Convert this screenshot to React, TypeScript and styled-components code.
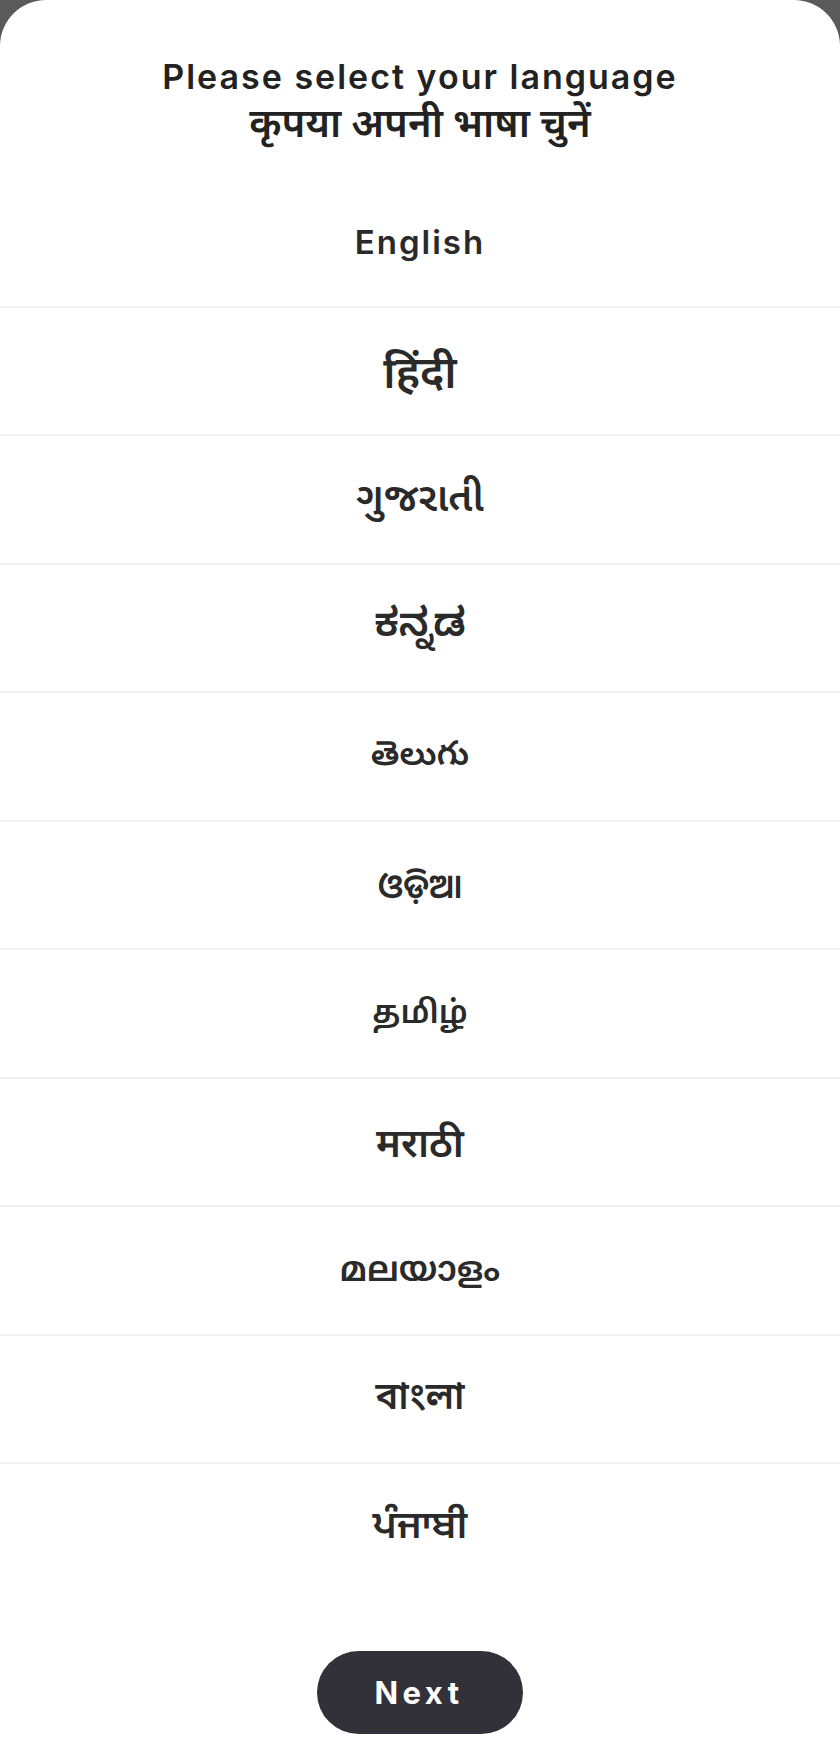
import React, { useState } from 'react';
import styled, { createGlobalStyle } from 'styled-components';

const GlobalStyle = createGlobalStyle`
  html, body {
    margin: 0;
    padding: 0;
    background: #5a5a5a;
  }
  body {
    font-family: Inter, "Noto Sans", "Noto Sans Devanagari", "Noto Sans Gujarati", "Noto Sans Kannada",
      "Noto Sans Telugu", "Noto Sans Oriya", "Noto Sans Tamil", "Noto Sans Malayalam",
      "Noto Sans Bengali", "Noto Sans Gurmukhi", sans-serif;
    -webkit-font-smoothing: antialiased;
  }
`;

const Sheet = styled.div`
  background: #ffffff;
  border-radius: 46px 46px 0 0;
  height: 1750px;
  display: flex;
  flex-direction: column;
  overflow: hidden;
`;

const Header = styled.div`
  padding: 54px 24px 33px;
  text-align: center;
`;

const TitleLine = styled.div<{ size: number; spacing: number }>`
  font-size: ${props => props.size}px;
  font-weight: 600;
  line-height: 46px;
  color: #222222;
  letter-spacing: ${props => props.spacing}px;
`;

const LanguageList = styled.ul`
  list-style: none;
  margin: 0;
  padding: 0;
`;

const LanguageRow = styled.li<{ selected: boolean; last: boolean; size: number; spacing: number }>`
  height: 126.5px;
  display: flex;
  align-items: center;
  justify-content: center;
  border-bottom: 2px solid ${props => (props.last ? 'transparent' : '#f1f1f1')};
  background: ${props => (props.selected ? '#f6f6f8' : '#ffffff')};
  font-size: ${props => props.size}px;
  letter-spacing: ${props => props.spacing}px;
  font-weight: 600;
  color: #2a2a2a;
  cursor: pointer;
`;

const Footer = styled.div`
  display: flex;
  justify-content: center;
  padding-top: 58px;
`;

const NextButton = styled.button`
  width: 206px;
  height: 83px;
  border: none;
  border-radius: 42px;
  background: #323038;
  color: #ffffff;
  font-family: Inter, "Noto Sans", sans-serif;
  font-size: 31px;
  font-weight: 700;
  letter-spacing: 4.5px;
  padding-left: 4px;
  cursor: pointer;
`;

const LANGUAGES = [
  { label: 'English', size: 33, spacing: 2 },
  { label: 'हिंदी', size: 44, spacing: 0 },
  { label: 'ગુજરાતી', size: 40, spacing: 0 },
  { label: 'ಕನ್ನಡ', size: 40, spacing: 0 },
  { label: 'తెలుగు', size: 34, spacing: 0 },
  { label: 'ଓଡ଼ିଆ', size: 34, spacing: 0 },
  { label: 'தமிழ்', size: 32, spacing: 0 },
  { label: 'मराठी', size: 39.5, spacing: 0 },
  { label: 'മലയാളം', size: 35, spacing: 0 },
  { label: 'বাংলা', size: 38, spacing: 0 },
  { label: 'ਪੰਜਾਬੀ', size: 39, spacing: 0 },
];

const App: React.FC = () => {
  const [selected, setSelected] = useState<string | null>(null);

  return (
    <>
      <GlobalStyle />
      <Sheet>
        <Header>
          <TitleLine size={34} spacing={2}>Please select your language</TitleLine>
          <TitleLine size={40} spacing={0}>कृपया अपनी भाषा चुनें</TitleLine>
        </Header>

        <LanguageList>
          {LANGUAGES.map((lang, i) => (
            <LanguageRow
              key={lang.label}
              size={lang.size}
              spacing={lang.spacing}
              selected={selected === lang.label}
              last={i === LANGUAGES.length - 1}
              onClick={() => setSelected(lang.label)}
            >
              {lang.label}
            </LanguageRow>
          ))}
        </LanguageList>

        <Footer>
          <NextButton>Next</NextButton>
        </Footer>
      </Sheet>
    </>
  );
};

export default App;
